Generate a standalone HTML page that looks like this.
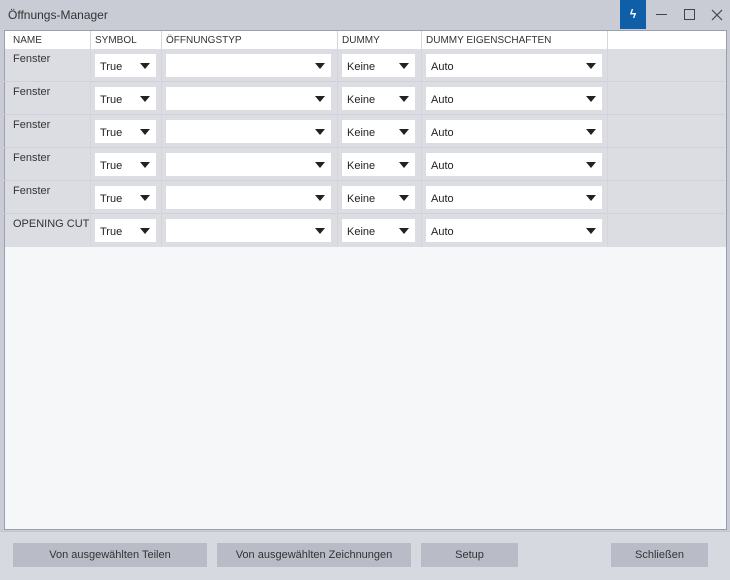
<!DOCTYPE html>
<html><head><style>
*{margin:0;padding:0;box-sizing:border-box}
body{width:730px;height:580px;background:#c9cbd5;font-family:"Liberation Sans",sans-serif;position:relative;overflow:hidden;color:#222}
.a{position:absolute}
.title{left:8px;top:8px;font-size:12px;color:#333}
.grid{left:4px;top:30px;width:723px;height:500px;background:#f6f7f9;border:1px solid #9aa0b0}
.hdr{left:0;top:0;width:721px;height:18px;background:#fff}
.h{position:absolute;top:4px;font-size:10px;color:#333}
.vl{position:absolute;width:1px;background:#d4d6dc}
.rows{left:0;top:18px;width:721px;height:198px;background:#dcdde3}
.rs{position:absolute;left:0;width:721px;height:1px;background:#cfd1d8}
.nm{position:absolute;left:8px;font-size:11px;color:#333}
.cb{position:absolute;height:23px;background:#fff;font-size:11px;padding:7px 0 0 5px;color:#222}
.cb:after{content:"";position:absolute;right:6px;top:9px;border-left:5px solid transparent;border-right:5px solid transparent;border-top:6px solid #222}
.btn{position:absolute;top:543px;height:24px;background:#b9bbc7;font-size:11px;color:#333;text-align:center;line-height:24px}
</style></head><body>
<div class="a title">Öffnungs-Manager</div>
<div class="a" style="left:620px;top:0;width:26px;height:29px;background:#0f5fa8;color:#fff;font-size:12px;text-align:center;line-height:28px;font-weight:bold">ϟ</div>
<div class="a" style="left:656px;top:14px;width:11px;height:1px;background:#444"></div>
<div class="a" style="left:684px;top:9px;width:11px;height:11px;border:1px solid #444"></div>
<svg class="a" style="left:711px;top:9px" width="12" height="12"><path d="M1 1L11 11M11 1L1 11" stroke="#444" stroke-width="1.2"/></svg>
<div class="a grid">
 <div class="a hdr"></div>
 <div class="a rows"></div>
 <div class="vl" style="left:85px;top:0;height:216px"></div>
 <div class="vl" style="left:156px;top:0;height:216px"></div>
 <div class="vl" style="left:332px;top:0;height:216px"></div>
 <div class="vl" style="left:416px;top:0;height:216px"></div>
 <div class="vl" style="left:602px;top:0;height:216px"></div>
 <div class="h" style="left:8px">NAME</div>
 <div class="h" style="left:90px">SYMBOL</div>
 <div class="h" style="left:161px">ÖFFNUNGSTYP</div>
 <div class="h" style="left:337px">DUMMY</div>
 <div class="h" style="left:421px">DUMMY EIGENSCHAFTEN</div>
</div>
<div id="r"></div>
<script>
var h='';var names=['Fenster','Fenster','Fenster','Fenster','Fenster','OPENING CUT'];
for(var i=0;i<6;i++){var y=48+i*33;
if(i>0)h+='<div class="rs" style="top:'+y+'px;left:4px;width:721px"></div>';
h+='<div class="nm" style="left:13px;top:'+(y+5)+'px">'+names[i]+'</div>';
h+='<div class="cb" style="left:95px;width:61px;top:'+(y+6)+'px">True</div>';
h+='<div class="cb" style="left:166px;width:165px;top:'+(y+6)+'px"></div>';
h+='<div class="cb" style="left:342px;width:73px;top:'+(y+6)+'px">Keine</div>';
h+='<div class="cb" style="left:426px;width:176px;top:'+(y+6)+'px">Auto</div>';}
document.getElementById('r').innerHTML=h;
</script>
<div class="a" style="left:0;top:531px;width:730px;height:49px;background:#d7d9e0;border-top:1px solid #c4c6cf"></div>
<div class="btn" style="left:13px;width:194px">Von ausgewählten Teilen</div>
<div class="btn" style="left:217px;width:194px">Von ausgewählten Zeichnungen</div>
<div class="btn" style="left:421px;width:97px">Setup</div>
<div class="btn" style="left:611px;width:97px">Schließen</div>
</body></html>
